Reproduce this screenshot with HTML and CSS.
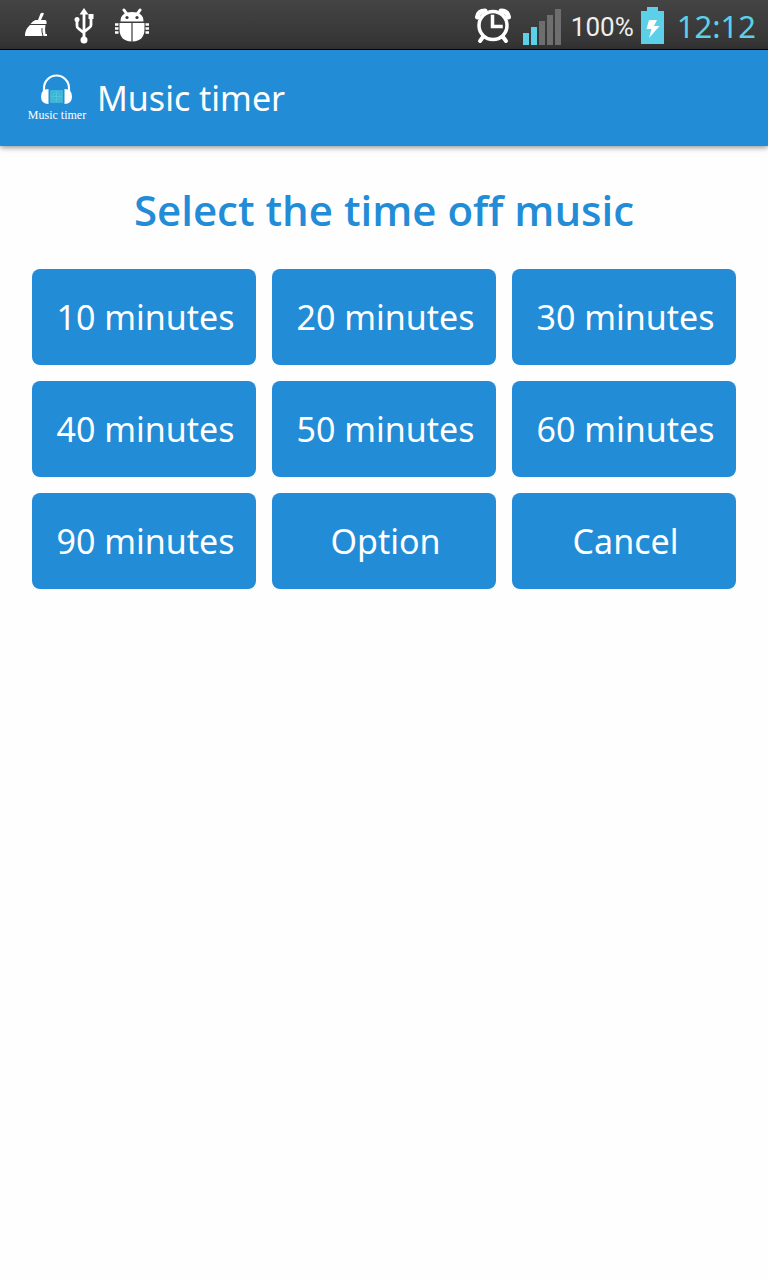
FILE: index.html
```html
<!DOCTYPE html>
<html lang="en">

<head>
  <meta charset="UTF-8">
  <meta name="viewport" content="width=device-width, initial-scale=1.0">
  <title>Music timer</title>
  <link rel="stylesheet" href="styles.css">
</head>

<body>
  <div class="status-bar">
    <div class="status-left">
      <!-- cleaner -->
      <svg width="24" height="36" viewBox="0 0 24 36" fill="#fff">
        <path d="M16.500 5.500q2-1.500 3.500 0l-3 6.500h4q1.500 0 1.500 1.500V16H6.500q2-3 5-4H14z"/>
        <path d="M6 17h15.500q-1 4 0 9h1.500v2H1q-.5-6 5-11z"/>
        <path d="M18 20q-.5 4 1 8" fill="none" stroke="#3b3b3b"/>
      </svg>
      <!-- usb -->
      <svg width="20" height="36" viewBox="0 0 20 36" fill="#fff">
        <path d="M10 0l4.500 6.500h-9z"/>
        <circle cx="10" cy="32" r="3.500"/>
        <circle cx="3" cy="11.500" r="2.500"/>
        <rect x="14.500" y="6" width="5" height="5"/>
        <path d="M10 5v25M3 12v6q0 2 2 3l5 4M17 10v7q0 2-2 3l-5 4" fill="none" stroke="#fff" stroke-width="2.800"/>
      </svg>
      <!-- debugging -->
      <svg width="36" height="36" viewBox="0 0 36 36" fill="#fff">
        <path d="M10 2l3.500 5M26 2l-3.500 5" stroke="#fff" stroke-width="3" stroke-linecap="round"/>
        <path d="M6.500 13.500q0-9.500 11.500-9.500t11.500 9.500z"/>
        <circle cx="13" cy="9.500" r="1.600" fill="#3b3b3b"/>
        <circle cx="23" cy="9.500" r="1.600" fill="#3b3b3b"/>
        <path d="M5.500 15h11.900v18.500Q5.500 33 5.500 21zM30.500 15H18.600v18.500q11.900-.5 11.900-12.500z"/>
        <path d="M1 16.500h3.500M1 20.500h3.500M1 24.500h3.500M31.500 16.500H35M31.500 20.500H35M31.500 24.500H35" stroke="#fff" stroke-width="2.600"/>
      </svg>
    </div>
    <div class="status-right">
      <!-- alarm -->
      <svg width="38" height="36" viewBox="0 0 38 36" fill="none" stroke="#fff" stroke-linecap="round">
        <circle cx="19" cy="17.500" r="14" stroke-width="3.500"/>
        <path d="M3.500 9q1-6 7.500-6M34.500 9q-1-6-7.500-6" stroke-width="5"/>
        <path d="M9 29l-3 4M29 29l3 4" stroke-width="4"/>
        <path d="M18.500 8.500v10H27" stroke-width="3.500" stroke-linecap="square"/>
      </svg>
      <!-- signal -->
      <svg class="signal" width="38" height="36" viewBox="0 0 38 36">
        <path d="M0 24h6v12H0zM8 18h6v18H8z" fill="#5bd0e8"/>
        <path d="M16 12h6v24h-6zM24 6h6v30h-6zM32 0h6v36h-6z" fill="#6e6e6e"/>
      </svg>
      <span class="battery-level">100%</span>
      <svg class="battery" width="23" height="37" viewBox="0 0 23 37">
        <path d="M6 0h11v4h6v33H0V4h6z" fill="#5bd0e8"/>
        <path d="M8 13h8l-3 6h5.500L8 31l2.500-9H5.500z" fill="#fff"/>
      </svg>
      <span class="clock">12:12</span>
    </div>
  </div>

  <header class="app-bar">
    <svg class="logo" width="64" height="64" viewBox="0 0 64 64">
      <rect x="26" y="24" width="13" height="13" rx="1" fill="#3db4d8"/>
      <path d="M32.500 25v11M27 30.500h11" stroke="#4fc4d8"/>
      <circle cx="32.500" cy="30.500" r="4" fill="none" stroke="#48bdd8"/>
      <path d="M20 26v-4a12.500 12.500 0 0 1 25 0v4" fill="none" stroke="#fff" stroke-width="2.200"/>
      <path d="M24.500 23v15q-7.500 0-7.500-7.500t7.500-7.500zM40.500 23v15q7.500 0 7.500-7.500t-7.500-7.500z" fill="#fff"/>
      <text class="logo-text" x="33" y="53" text-anchor="middle" fill="#fff">Music timer</text>
    </svg>
    <span class="app-title">Music timer</span>
  </header>

  <main class="container">
    <h1>Select the time off music</h1>
    <div class="button-grid">
      <button type="button">10 minutes</button>
      <button type="button">20 minutes</button>
      <button type="button">30 minutes</button>
      <button type="button">40 minutes</button>
      <button type="button">50 minutes</button>
      <button type="button">60 minutes</button>
      <button type="button">90 minutes</button>
      <button type="button">Option</button>
      <button type="button">Cancel</button>
    </div>
  </main>
</body>

</html>
```
FILE: styles.css
```css
body {
  font-family: "Noto Sans", sans-serif;
  background-color: #fefefe;
  margin: 0;
}

.status-bar {
  display: flex;
  justify-content: space-between;
  align-items: center;
  box-sizing: border-box;
  height: 50px;
  padding: 2px 12px 0 24px;
  background: linear-gradient(#444, #333);
  border-bottom: 1px solid #000;
}

.status-left {
  display: flex;
  align-items: center;
  gap: 26px;
}

.status-left svg:last-child {
  margin-left: -6px;
}

.status-right {
  display: flex;
  align-items: center;
}

.signal {
  margin: 2px 10px 0 11px;
}

.battery-level {
  padding-top: 2px;
  font-family: Roboto, sans-serif;
  font-size: 26px;
  color: #eee;
}

.battery {
  margin: 0 13px 0 7px;
}

.clock {
  font-size: 31px;
  color: #5bd0e8;
}

.app-bar {
  display: flex;
  align-items: center;
  height: 96px;
  padding: 0 24px;
  background-color: #228cd7;
  color: #fff;
  box-shadow: 0 1px 6px rgba(0, 0, 0, 0.5);
}

.logo-text {
  font-family: "Liberation Serif", serif;
  font-size: 12px;
}

.app-title {
  margin-left: 9px;
  font-size: 34px;
}

.container {
  padding: 32px;
}

h1 {
  margin: 0 0 27px;
  font-family: "Open Sans", "Noto Sans", sans-serif;
  font-size: 42px;
  font-weight: 600;
  line-height: 64px;
  text-align: center;
  color: #228cd7;
}

.button-grid {
  display: grid;
  grid-template-columns: repeat(3, 1fr);
  gap: 16px;
}

button {
  height: 96px;
  padding: 0 0 0 3px;
  font-family: inherit;
  font-size: 34px;
  color: #fff;
  background-color: #228cd7;
  border: none;
  border-radius: 8px;
  cursor: pointer;
}
```
